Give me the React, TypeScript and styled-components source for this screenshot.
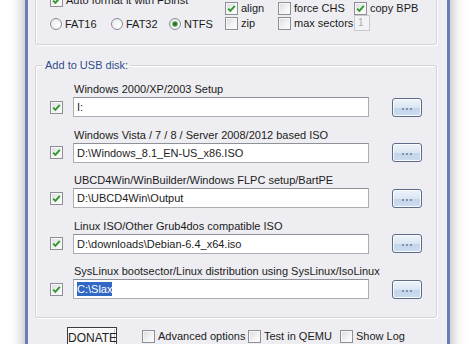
import styled, { createGlobalStyle } from 'styled-components';

const GlobalStyle = createGlobalStyle`
    html, body {
        margin: 0;
        padding: 0;
        background: #fff;
        overflow: hidden;
    }
    body {
        font-family: "Liberation Sans", Arial, sans-serif;
        font-size: 11px;
        color: #1b1b1b;
    }
`;

const Page = styled.div`
    width: 474px;
    height: 344px;
    overflow: hidden;
    padding-left: 25px;
    box-sizing: border-box;
`;

const Window = styled.div`
    width: 425px;
    height: 400px;
    margin-top: -30px;
    padding: 10px 10px 0 7px;
    box-sizing: border-box;
    background: #eeeef2;
    border-left: 3px solid #687db6;
    border-right: 3px solid #687db6;
    box-shadow: 0 0 14px rgba(0, 0, 0, 0.35);
`;

const TopFrame = styled.div`
    display: flex;
    align-items: flex-end;
    height: 65px;
    box-sizing: border-box;
    padding: 12px 0 13px 14px;
    border: 1px solid #d3d3d8;
    border-radius: 3px;
    box-shadow: inset 1px 1px 0 #fff, 1px 1px 0 #fff;
`;

const LeftCol = styled.div`
    width: 175px;
    display: flex;
    flex-direction: column;
    gap: 10px;
`;

const RadioRow = styled.div`
    display: grid;
    grid-template-columns: 61px 58px auto;
    height: 14px;
    align-items: center;
`;

const OptGrid = styled.div`
    display: grid;
    grid-template-columns: 53px 76px auto;
    grid-template-rows: 14px 16px;
    align-items: center;
`;

const Item = styled.label`
    display: flex;
    align-items: center;
    gap: 3px;
    height: 14px;
    white-space: nowrap;
`;

const Box = styled.span<{ $area?: string }>`
    grid-area: ${p => p.$area || 'auto'};
    width: 13px;
    height: 13px;
    box-sizing: border-box;
    border: 1px solid #8e8f94;
    background: linear-gradient(135deg, #d9dadd 0%, #f4f4f6 60%, #fff 100%);
    box-shadow: inset 0 0 0 1px #f7f7f7;
    display: flex;
    align-items: center;
    justify-content: center;
    flex: none;
`;

const Radio = styled.span<{ $on?: boolean }>`
    width: 12px;
    height: 12px;
    box-sizing: border-box;
    border-radius: 50%;
    border: 1px solid #8a8c92;
    background: radial-gradient(circle at 65% 65%, #fff 0%, #e4e5e8 100%);
    display: flex;
    align-items: center;
    justify-content: center;
    flex: none;

    &::after {
        content: '';
        display: ${p => (p.$on ? 'block' : 'none')};
        width: 4px;
        height: 4px;
        border-radius: 50%;
        background: #2d6b2a;
        box-shadow: 0 0 0 1px #7fbf6e;
    }
`;

const Small = styled.span`
    width: 16px;
    height: 16px;
    box-sizing: border-box;
    border: 1px solid #c9c9cd;
    background: #f3f3f5;
    color: #a9a9ad;
    font-size: 10px;
    line-height: 14px;
    padding-left: 3px;
`;

const UsbFrame = styled.fieldset`
    margin: 14px 0 0;
    padding: 11px 15px 18px 7px;
    border: 1px solid #d3d3d8;
    border-radius: 3px;
    box-shadow: inset 1px 1px 0 #fff, 1px 1px 0 #fff;
    min-width: 0;
`;

const Legend = styled.legend`
    padding: 0 2px;
    font-size: 11px;
    line-height: 13px;
    color: #2f4c8c;
`;

const Rows = styled.div`
    display: flex;
    flex-direction: column;
    gap: 11.5px;
    padding-left: 7px;
`;

const Row = styled.div`
    display: grid;
    grid-template-columns: 23px 296px 53px;
    grid-template-rows: 13px 20px;
    grid-template-areas:
        ". label ."
        "check field browse";
    row-gap: 1px;
    align-items: center;
`;

const RowLabel = styled.div`
    grid-area: label;
    padding-left: 1px;
    line-height: 13px;
    white-space: nowrap;
`;

const Field = styled.div`
    grid-area: field;
    height: 20px;
    box-sizing: border-box;
    border: 1px solid #abadb3;
    border-top-color: #8e9198;
    background: #fff;
    padding-left: 3px;
    line-height: 18px;
    white-space: nowrap;
    overflow: hidden;
`;

const Selected = styled.span`
    background: #3168c6;
    color: #fff;
    padding: 1px 0;
`;

const Browse = styled.div`
    grid-area: browse;
    justify-self: end;
    width: 30px;
    height: 19px;
    box-sizing: border-box;
    border: 1px solid #5d6b86;
    border-radius: 3px;
    background: linear-gradient(#eef3fa 0%, #dbe6f3 50%, #c3d5ea 51%, #cddcee 100%);
    box-shadow: inset 0 0 0 1px #f8fbff;
    display: flex;
    align-items: center;
    justify-content: center;
    gap: 2px;
    padding-top: 3px;
`;

const Dot = styled.span`
    width: 2px;
    height: 2px;
    background: #8391ad;
`;

const BottomBar = styled.div`
    display: grid;
    grid-template-columns: 75px 106px 92px auto;
    align-items: start;
    margin-top: 9px;
    padding-left: 32px;
`;

const Donate = styled.div`
    width: 50px;
    height: 22px;
    box-sizing: border-box;
    border: 1px solid #3c3c3c;
    box-shadow: inset 0 0 0 1px #fff, inset -1px -1px 0 1px #c8c8c8;
    background: #f7f7f7;
    font-size: 12px;
    line-height: 20px;
    text-align: center;
    color: #222;
`;

const BottomItem = styled(Item)`
    margin-top: 2px;
`;

const Check = ({ on, area }: { on?: boolean; area?: string }) => (
    <Box $area={area}>
        {on && (
            <svg width="9" height="9" viewBox="0 0 9 9">
                <path d="M1.2 4.6 L3.4 6.9 L7.8 1.8" fill="none" stroke="#2f9a2a" strokeWidth="1.9" />
            </svg>
        )}
    </Box>
);

const entries = [
    { label: 'Windows 2000/XP/2003 Setup', value: 'I:' },
    { label: 'Windows Vista / 7 / 8 / Server 2008/2012 based ISO', value: 'D:\\Windows_8.1_EN-US_x86.ISO' },
    { label: 'UBCD4Win/WinBuilder/Windows FLPC setup/BartPE', value: 'D:\\UBCD4Win\\Output' },
    { label: 'Linux ISO/Other Grub4dos compatible ISO', value: 'D:\\downloads\\Debian-6.4_x64.iso' },
    { label: 'SysLinux bootsector/Linux distribution using SysLinux/IsoLinux', value: 'C:\\Slax', selected: true },
];

export default function App() {
    return (
        <>
            <GlobalStyle />
            <Page>
                <Window>
                    <TopFrame>
                        <LeftCol>
                            <Item><Check on />Auto format it with FBinst</Item>
                            <RadioRow>
                                <Item><Radio />FAT16</Item>
                                <Item><Radio />FAT32</Item>
                                <Item><Radio $on />NTFS</Item>
                            </RadioRow>
                        </LeftCol>
                        <OptGrid>
                            <Item><Check on />align</Item>
                            <Item><Check />force CHS</Item>
                            <Item><Check on />copy BPB</Item>
                            <Item><Check />zip</Item>
                            <Item><Check />max sectors</Item>
                            <Small>1</Small>
                        </OptGrid>
                    </TopFrame>

                    <UsbFrame>
                        <Legend>Add to USB disk:</Legend>
                        <Rows>
                            {entries.map(e => (
                                <Row key={e.label}>
                                    <RowLabel>{e.label}</RowLabel>
                                    <Check on area="check" />
                                    <Field>{e.selected ? <Selected>{e.value}</Selected> : e.value}</Field>
                                    <Browse><Dot /><Dot /><Dot /></Browse>
                                </Row>
                            ))}
                        </Rows>
                    </UsbFrame>

                    <BottomBar>
                        <Donate>DONATE</Donate>
                        <BottomItem><Check />Advanced options</BottomItem>
                        <BottomItem><Check />Test in QEMU</BottomItem>
                        <BottomItem><Check />Show Log</BottomItem>
                    </BottomBar>
                </Window>
            </Page>
        </>
    );
}
